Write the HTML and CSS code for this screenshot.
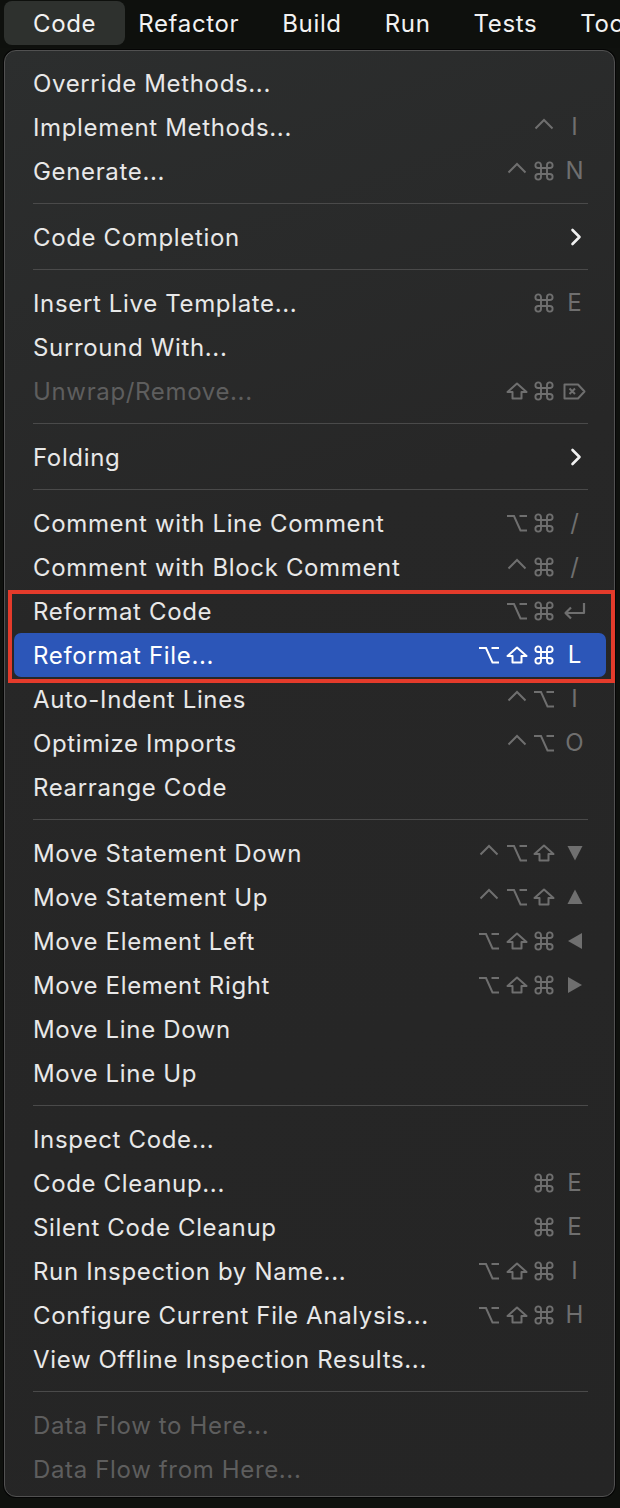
FILE: index.html
```html
<!DOCTYPE html>
<html lang="en">
<head>
<meta charset="utf-8">
<title>Code menu</title>
<link rel="stylesheet" href="styles.css">
</head>
<body>
<svg class="sprite" xmlns="http://www.w3.org/2000/svg">
  <symbol id="ctrl" viewBox="0 0 20 18"><path d="M1.5 10.5 L10 2 L18.5 10.5" fill="none" stroke="currentColor" stroke-width="2"/></symbol>
  <symbol id="opt" viewBox="0 0 22 18"><path d="M1 2 H8 L14.5 16.5 H21 M13.5 2 H21" fill="none" stroke="currentColor" stroke-width="2"/></symbol>
  <symbol id="shift" viewBox="0 0 22 18"><path d="M11 1.5 L20.5 10 H15.5 V16.5 H6.5 V10 H1.5 Z" fill="none" stroke="currentColor" stroke-width="2" stroke-linejoin="round"/></symbol>
  <symbol id="cmd" viewBox="0 0 20 20"><path d="M7 7 V4.2 A2.8 2.8 0 1 0 4.2 7 H15.8 A2.8 2.8 0 1 0 13 4.2 V15.8 A2.8 2.8 0 1 0 15.8 13 H4.2 A2.8 2.8 0 1 0 7 15.8 Z" fill="none" stroke="currentColor" stroke-width="1.9"/></symbol>
  <symbol id="del" viewBox="0 0 23 17"><path d="M1.5 1.5 H15 L21.5 8.5 L15 15.5 H1.5 Z M6.5 5.5 L12 11 M12 5.5 L6.5 11" fill="none" stroke="currentColor" stroke-width="2" stroke-linejoin="round"/></symbol>
  <symbol id="ret" viewBox="0 0 23 18"><path d="M21 1 V11 H2.5 M8 5.5 L2.5 11 L8 16.5" fill="none" stroke="currentColor" stroke-width="2.2" stroke-linejoin="round"/></symbol>
  <symbol id="down" viewBox="0 0 16 16"><path d="M0.5 1 H15.5 L8 15.5 Z" fill="currentColor"/></symbol>
  <symbol id="up" viewBox="0 0 16 16"><path d="M8 0.5 L15.5 15 H0.5 Z" fill="currentColor"/></symbol>
  <symbol id="left" viewBox="0 0 16 16"><path d="M15 0 V16 L1 8 Z" fill="currentColor"/></symbol>
  <symbol id="right" viewBox="0 0 16 16"><path d="M1 0 V16 L15 8 Z" fill="currentColor"/></symbol>
  <symbol id="chev" viewBox="0 0 12 18"><path d="M2.5 2 L9.5 9 L2.5 16" fill="none" stroke="currentColor" stroke-width="2.6" stroke-linecap="round" stroke-linejoin="round"/></symbol>
</svg>

<nav class="menubar">
  <span class="mb-item active">Code</span>
  <span class="mb-item">Refactor</span>
  <span class="mb-item">Build</span>
  <span class="mb-item">Run</span>
  <span class="mb-item">Tests</span>
  <span class="mb-item">Tools</span>
</nav>

<div class="menu">
  <div class="item"><span class="label">Override Methods...</span></div>
  <div class="item"><span class="label">Implement Methods...</span>
    <span class="sc"><span class="mods"><span class="m"><svg class="g-ctrl"><use href="#ctrl"/></svg></span></span><span class="key">I</span></span></div>
  <div class="item"><span class="label">Generate...</span>
    <span class="sc"><span class="mods"><span class="m"><svg class="g-ctrl"><use href="#ctrl"/></svg></span><span class="m"><svg class="g-cmd"><use href="#cmd"/></svg></span></span><span class="key">N</span></span></div>
  <div class="sep"></div>
  <div class="item"><span class="label">Code Completion</span>
    <span class="sc"><span class="key chev"><svg class="g-chev"><use href="#chev"/></svg></span></span></div>
  <div class="sep"></div>
  <div class="item"><span class="label">Insert Live Template...</span>
    <span class="sc"><span class="mods"><span class="m"><svg class="g-cmd"><use href="#cmd"/></svg></span></span><span class="key">E</span></span></div>
  <div class="item"><span class="label">Surround With...</span></div>
  <div class="item disabled"><span class="label">Unwrap/Remove...</span>
    <span class="sc"><span class="mods"><span class="m"><svg class="g-shift"><use href="#shift"/></svg></span><span class="m"><svg class="g-cmd"><use href="#cmd"/></svg></span></span><span class="key"><svg class="g-del"><use href="#del"/></svg></span></span></div>
  <div class="sep"></div>
  <div class="item"><span class="label">Folding</span>
    <span class="sc"><span class="key chev"><svg class="g-chev"><use href="#chev"/></svg></span></span></div>
  <div class="sep"></div>
  <div class="item"><span class="label">Comment with Line Comment</span>
    <span class="sc"><span class="mods"><span class="m"><svg class="g-opt"><use href="#opt"/></svg></span><span class="m"><svg class="g-cmd"><use href="#cmd"/></svg></span></span><span class="key">/</span></span></div>
  <div class="item"><span class="label">Comment with Block Comment</span>
    <span class="sc"><span class="mods"><span class="m"><svg class="g-ctrl"><use href="#ctrl"/></svg></span><span class="m"><svg class="g-cmd"><use href="#cmd"/></svg></span></span><span class="key">/</span></span></div>
  <div class="item"><span class="label">Reformat Code</span>
    <span class="sc"><span class="mods"><span class="m"><svg class="g-opt"><use href="#opt"/></svg></span><span class="m"><svg class="g-cmd"><use href="#cmd"/></svg></span></span><span class="key"><svg class="g-ret"><use href="#ret"/></svg></span></span></div>
  <div class="item selected"><span class="label">Reformat File...</span>
    <span class="sc"><span class="mods"><span class="m"><svg class="g-opt"><use href="#opt"/></svg></span><span class="m"><svg class="g-shift"><use href="#shift"/></svg></span><span class="m"><svg class="g-cmd"><use href="#cmd"/></svg></span></span><span class="key">L</span></span></div>
  <div class="item"><span class="label">Auto-Indent Lines</span>
    <span class="sc"><span class="mods"><span class="m"><svg class="g-ctrl"><use href="#ctrl"/></svg></span><span class="m"><svg class="g-opt"><use href="#opt"/></svg></span></span><span class="key">I</span></span></div>
  <div class="item"><span class="label">Optimize Imports</span>
    <span class="sc"><span class="mods"><span class="m"><svg class="g-ctrl"><use href="#ctrl"/></svg></span><span class="m"><svg class="g-opt"><use href="#opt"/></svg></span></span><span class="key">O</span></span></div>
  <div class="item"><span class="label">Rearrange Code</span></div>
  <div class="sep"></div>
  <div class="item"><span class="label">Move Statement Down</span>
    <span class="sc"><span class="mods"><span class="m"><svg class="g-ctrl"><use href="#ctrl"/></svg></span><span class="m"><svg class="g-opt"><use href="#opt"/></svg></span><span class="m"><svg class="g-shift"><use href="#shift"/></svg></span></span><span class="key"><svg class="g-tri"><use href="#down"/></svg></span></span></div>
  <div class="item"><span class="label">Move Statement Up</span>
    <span class="sc"><span class="mods"><span class="m"><svg class="g-ctrl"><use href="#ctrl"/></svg></span><span class="m"><svg class="g-opt"><use href="#opt"/></svg></span><span class="m"><svg class="g-shift"><use href="#shift"/></svg></span></span><span class="key"><svg class="g-tri"><use href="#up"/></svg></span></span></div>
  <div class="item"><span class="label">Move Element Left</span>
    <span class="sc"><span class="mods"><span class="m"><svg class="g-opt"><use href="#opt"/></svg></span><span class="m"><svg class="g-shift"><use href="#shift"/></svg></span><span class="m"><svg class="g-cmd"><use href="#cmd"/></svg></span></span><span class="key"><svg class="g-tri"><use href="#left"/></svg></span></span></div>
  <div class="item"><span class="label">Move Element Right</span>
    <span class="sc"><span class="mods"><span class="m"><svg class="g-opt"><use href="#opt"/></svg></span><span class="m"><svg class="g-shift"><use href="#shift"/></svg></span><span class="m"><svg class="g-cmd"><use href="#cmd"/></svg></span></span><span class="key"><svg class="g-tri"><use href="#right"/></svg></span></span></div>
  <div class="item"><span class="label">Move Line Down</span></div>
  <div class="item"><span class="label">Move Line Up</span></div>
  <div class="sep"></div>
  <div class="item"><span class="label">Inspect Code...</span></div>
  <div class="item"><span class="label">Code Cleanup...</span>
    <span class="sc"><span class="mods"><span class="m"><svg class="g-cmd"><use href="#cmd"/></svg></span></span><span class="key">E</span></span></div>
  <div class="item"><span class="label">Silent Code Cleanup</span>
    <span class="sc"><span class="mods"><span class="m"><svg class="g-cmd"><use href="#cmd"/></svg></span></span><span class="key">E</span></span></div>
  <div class="item"><span class="label">Run Inspection by Name...</span>
    <span class="sc"><span class="mods"><span class="m"><svg class="g-opt"><use href="#opt"/></svg></span><span class="m"><svg class="g-shift"><use href="#shift"/></svg></span><span class="m"><svg class="g-cmd"><use href="#cmd"/></svg></span></span><span class="key">I</span></span></div>
  <div class="item"><span class="label">Configure Current File Analysis...</span>
    <span class="sc"><span class="mods"><span class="m"><svg class="g-opt"><use href="#opt"/></svg></span><span class="m"><svg class="g-shift"><use href="#shift"/></svg></span><span class="m"><svg class="g-cmd"><use href="#cmd"/></svg></span></span><span class="key">H</span></span></div>
  <div class="item"><span class="label">View Offline Inspection Results...</span></div>
  <div class="sep"></div>
  <div class="item disabled"><span class="label">Data Flow to Here...</span></div>
  <div class="item disabled"><span class="label">Data Flow from Here...</span></div>
</div>

<div class="annot"></div>
</body>
</html>
```

FILE: styles.css
```css
html, body {
  margin: 0;
  padding: 0;
}
body {
  width: 620px;
  height: 1508px;
  overflow: hidden;
  background: #0f110e;
  font-family: "Inter", "Noto Sans", "Liberation Sans", sans-serif;
  font-size: 24px;
  letter-spacing: 0.65px;
  color: #e8e8e8;
  position: relative;
}
.sprite {
  position: absolute;
  width: 0;
  height: 0;
  overflow: hidden;
}

/* top menu bar */
.menubar {
  display: flex;
  align-items: center;
  height: 48px;
  background: #0e100d;
  white-space: nowrap;
  overflow: hidden;
}
.mb-item {
  display: flex;
  align-items: center;
  height: 44px;
  padding: 0 21.5px;
  color: #f2f2f2;
  margin-top: -2px;
  flex-shrink: 0;
}
.mb-item.active {
  margin-left: 4px;
  padding: 0 29px;
  background: #2e312e;
  border-radius: 8px;
}
.mb-item.active + .mb-item {
  padding-left: 13px;
}

/* dropdown panel */
.menu {
  margin: 2px 0 0 4px;
  width: 611px;
  height: 1447px;
  box-sizing: border-box;
  border: 1px solid #515151;
  border-radius: 12px;
  box-shadow: 0 0 0 1px #050505;
  background: linear-gradient(160deg, #2c2e2e 0%, #272727 35%, #252525 100%);
  padding: 10px 0 8px;
  display: flex;
  flex-direction: column;
}
.item {
  height: 44px;
  margin: 0 8px 0 9px;
  padding: 0 19px 0 19px;
  display: flex;
  align-items: center;
  justify-content: space-between;
  border-radius: 7px;
  flex-shrink: 0;
}
.label {
  white-space: nowrap;
}
.item.disabled .label {
  color: #5e5e5e;
}
.item.selected {
  background: #2c56b8;
}
.item.selected .label,
.item.selected .sc {
  color: #ffffff;
}
.sep {
  flex-shrink: 0;
  height: 1px;
  background: #4a4a4a;
  margin: 10px 26px 11px 28px;
}

/* shortcuts */
.sc {
  display: flex;
  align-items: center;
  color: #6f6f6f;
  letter-spacing: 0;
}
.mods {
  display: flex;
  align-items: center;
}
.m {
  width: 27.5px;
  display: flex;
  justify-content: center;
  align-items: center;
}
.key {
  width: 25px;
  margin-left: 4px;
  display: flex;
  justify-content: center;
  align-items: center;
  line-height: 1;
}
.key.chev {
  color: #f0f0f0;
}
svg {
  display: block;
}
.g-ctrl { width: 20px; height: 18px; }
.g-opt { width: 22px; height: 18px; }
.g-shift { width: 22px; height: 18px; }
.g-cmd { width: 20px; height: 20px; }
.g-del { width: 23px; height: 17px; }
.g-ret { width: 23px; height: 18px; }
.g-tri { width: 16px; height: 16px; }
.g-chev { width: 12px; height: 18px; margin-left: 3px; }

/* annotation overlay */
.annot {
  position: absolute;
  left: 8px;
  top: 590px;
  width: 607px;
  height: 93px;
  box-sizing: border-box;
  border: 4px solid #e43b2b;
  pointer-events: none;
}
```
